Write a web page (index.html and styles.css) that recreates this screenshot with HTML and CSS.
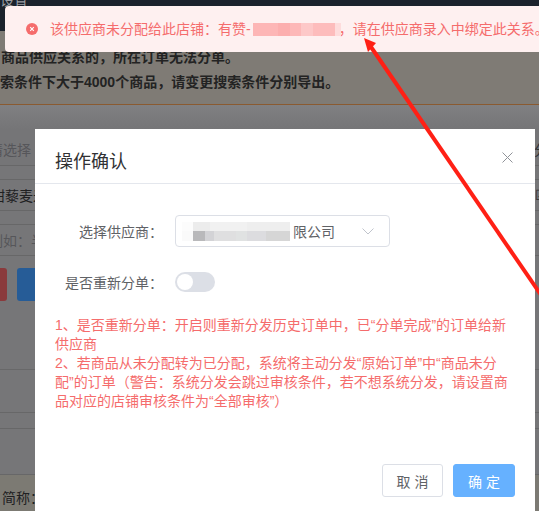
FILE: index.html
```html
<!DOCTYPE html>
<html lang="zh-CN">
<head>
<meta charset="utf-8">
<title>操作确认</title>
<link rel="stylesheet" href="styles.css">
</head>
<body>
<div class="page">
  <header class="topbar"><span class="topbar-title">设置</span></header>
  <section class="notice">
    <p class="notice-line first">商品供应关系的，所在订单无法分单。</p>
    <p class="notice-line second">索条件下大于4000个商品，请变更搜索条件分别导出。</p>
  </section>
  <div class="row row-a"><span class="muted">请选择</span><span class="edge">分</span></div>
  <div class="row row-gap"></div>
  <div class="row row-b"><span class="dark">甜藜麦米</span><span class="edge">☑</span></div>
  <div class="row row-gap"></div>
  <div class="row row-c"><span class="muted">例如：半</span></div>
  <div class="actions"><span class="btn-red"></span><span class="btn-blue"></span></div>
  <div class="row row-d"></div>
  <div class="row row-e"></div>
  <div class="row row-f"></div>
  <div class="row row-g"></div>
  <div class="foot"><span class="dark">简称：</span></div>
</div>

<main class="dialog">
  <div class="dialog-head">
    <h2 class="dialog-title">操作确认</h2>
    <svg class="close" viewBox="0 0 11 11" width="11" height="11"><path d="M.5.5l10 10M10.5.5l-10 10" stroke="#909399" stroke-width="1" fill="none"/></svg>
  </div>
  <div class="dialog-body">
    <div class="form-row select-row">
      <label class="form-label">选择供应商：</label>
      <div class="select">
        <span class="mosaic-grey"></span><span class="select-text">限公司</span>
        <svg class="chevron" viewBox="0 0 12 7" width="12" height="7"><path d="M.5.5L6 6 11.5.5" stroke="#c0c4cc" stroke-width="1" fill="none"/></svg>
      </div>
    </div>
    <div class="form-row switch-row">
      <label class="form-label">是否重新分单：</label>
      <span class="switch"><span class="knob"></span></span>
    </div>
    <div class="tips">
      <p>1、是否重新分单：开启则重新分发历史订单中，已“分单完成”的订单给新供应商</p>
      <p>2、若商品从未分配转为已分配，系统将主动分发“原始订单”中“商品未分配”的订单（警告：系统分发会跳过审核条件，若不想系统分发，请设置商品对应的店铺审核条件为“全部审核”）</p>
    </div>
  </div>
  <div class="dialog-foot">
    <button class="btn btn-cancel">取 消</button>
    <button class="btn btn-ok">确 定</button>
  </div>
</main>

<div class="message">
  <svg class="message-icon" viewBox="0 0 12 12" width="12" height="12"><circle cx="6" cy="6" r="6" fill="#f56c6c"/><path d="M4.2 4.2l3.6 3.6M7.8 4.2l-3.6 3.6" stroke="#fff" stroke-width="1.1"/></svg>
  <span class="message-text">该供应商未分配给此店铺：有赞-<span class="mosaic-pink"></span>，请在供应商录入中绑定此关系。</span>
</div>

<svg class="arrow" viewBox="0 0 539 511" width="539" height="511">
  <path d="M371 47L541 295" stroke="#ff2015" stroke-width="4" fill="none"/>
  <path d="M364 38L376 43L368 52Z" fill="#ff2015"/>
</svg>
</body>
</html>
```

FILE: styles.css
```css
* { box-sizing: border-box; }
html, body { margin: 0; padding: 0; }
body {
  position: relative;
  width: 539px;
  height: 511px;
  overflow: hidden;
  font-family: "Liberation Sans", "Noto Sans CJK SC", sans-serif;
  font-size: 14px;
  background: #767678;
}
p, h2 { margin: 0; }

.page { display: flex; flex-direction: column; height: 511px; overflow: hidden; }
.topbar { height: 31px; background: #1b222c; color: #9a9da2; flex: none; overflow: hidden; }
.topbar-title { display: block; font-size: 14px; line-height: 14px; margin-top: -7px; }
.notice { height: 74px; flex: none; background: #7f7b75; border-bottom: 1px solid #8a5a30; color: #232323; font-weight: 700; }
.notice-line { line-height: 20px; white-space: nowrap; }
.notice-line.first { margin-top: 16px; padding-left: 1px; }
.notice-line.second { margin-top: 5px; }

.row { flex: none; display: flex; justify-content: space-between; align-items: center; border-bottom: 1px solid #676768; white-space: nowrap; overflow: hidden; }
.row-a { height: 61px; padding-top: 28px; background: linear-gradient(#808082, #757577 40%); }
.row-gap { height: 14px; }
.row-b { height: 31px; }
.row-c { height: 31px; }
.muted { color: #56565a; margin-left: -11px; }
.dark { color: #202022; }
.row-b .dark { margin-left: -9px; }
.edge { color: #303033; margin-right: -9px; }

.actions { flex: none; height: 114px; display: flex; gap: 10px; align-items: flex-start; padding-top: 12px; border-bottom: 1px solid #686869; }
.btn-red { width: 7px; height: 33px; background: #8a3a3c; border-radius: 0 3px 3px 0; }
.btn-blue { width: 40px; height: 33px; background: #265c97; border-radius: 3px; }
.row-d { height: 0; border: 0; }
.row-e { height: 43px; }
.row-f { height: 16px; }
.row-g { height: 46px; }
.foot { flex: 1; background: #7c7a73; padding: 13px 0 0 2px; line-height: 20px; }

.dialog {
  position: absolute;
  left: 35px;
  top: 129px;
  width: 500px;
  height: 400px;
  background: #fff;
  display: flex;
  flex-direction: column;
}
.dialog-head { flex: none; height: 55px; padding: 21px 20px 0; border-bottom: 1px solid #e4e7ed; display: flex; justify-content: space-between; align-items: flex-start; }
.dialog-title { font-size: 18px; line-height: 24px; font-weight: 400; color: #303133; }
.close { margin: 2px 2px 0 0; }
.dialog-body { flex: none; height: 280px; padding-top: 31px; }
.form-row { display: flex; align-items: center; }
.select-row { height: 32px; }
.switch-row { height: 20px; margin-top: 25px; }
.form-label { width: 140px; padding-right: 12px; text-align: right; color: #606266; white-space: nowrap; }
.select { width: 215px; height: 32px; border: 1px solid #dcdfe6; border-radius: 4px; display: flex; align-items: center; padding: 0 15px 0 6px; color: #606266; }
.select-text { margin-left: 3px; }
.chevron { margin-left: auto; }
.mosaic-grey {
  width: 108px;
  height: 19px;
  filter: blur(.4px);
  background:
    linear-gradient(90deg, #fafafa 0 10%, #b9b9bb 10% 21%, #d3d3d6 21% 30%, #dfdfe0 30% 50%, #e0e2e2 50% 60%, #dcdcdf 60% 78%, #d6d6d6 78% 100%) 0 100% / 100% 10px no-repeat,
    linear-gradient(90deg, #fcfcfc 0 10%, #ececec 10% 26%, #f1f1f1 26% 60%, #eeeeee 60% 100%) 0 0 / 100% 9px no-repeat;
}
.switch { width: 40px; height: 20px; background: #dcdfe6; border-radius: 10px; padding: 2px; display: block; }
.knob { display: block; width: 16px; height: 16px; border-radius: 50%; background: #fff; }
.tips { margin: 24px 20px 0; width: 460px; color: #f56c6c; line-height: 19px; }
.dialog-foot { flex: none; display: flex; justify-content: flex-end; gap: 10px; padding-right: 20px; }
.btn { width: 62px; height: 33px; border-radius: 3px; font: inherit; font-size: 14px; padding: 0; }
.btn-cancel { width: 61px; background: #fff; border: 1px solid #dcdfe6; color: #606266; }
.btn-ok { background: #66b1ff; border: 1px solid #66b1ff; color: #fff; }

.message {
  position: absolute;
  left: 5px;
  top: 6px;
  width: 560px;
  height: 46px;
  background: #fef0f0;
  display: flex;
  align-items: center;
  padding-left: 21px;
  gap: 12px;
  border-radius: 4px 0 0 4px;
}
.message-icon { flex: none; }
.message-text { color: #f56c6c; white-space: nowrap; line-height: 20px; display: flex; align-items: center; }
.mosaic-pink {
  display: inline-block;
  width: 88px;
  height: 13px;
  margin: 0 -2px 0 2px;
  filter: blur(.3px);
  background: linear-gradient(90deg, #fdb6b6 0 28%, #fcaeae 28% 42%, #fdb8b8 42% 55%, #fdc8c8 55% 68%, #fdbcbc 68% 93%, #fedcdc 93% 100%);
}
.arrow { position: absolute; left: 0; top: 0; pointer-events: none; }
```
